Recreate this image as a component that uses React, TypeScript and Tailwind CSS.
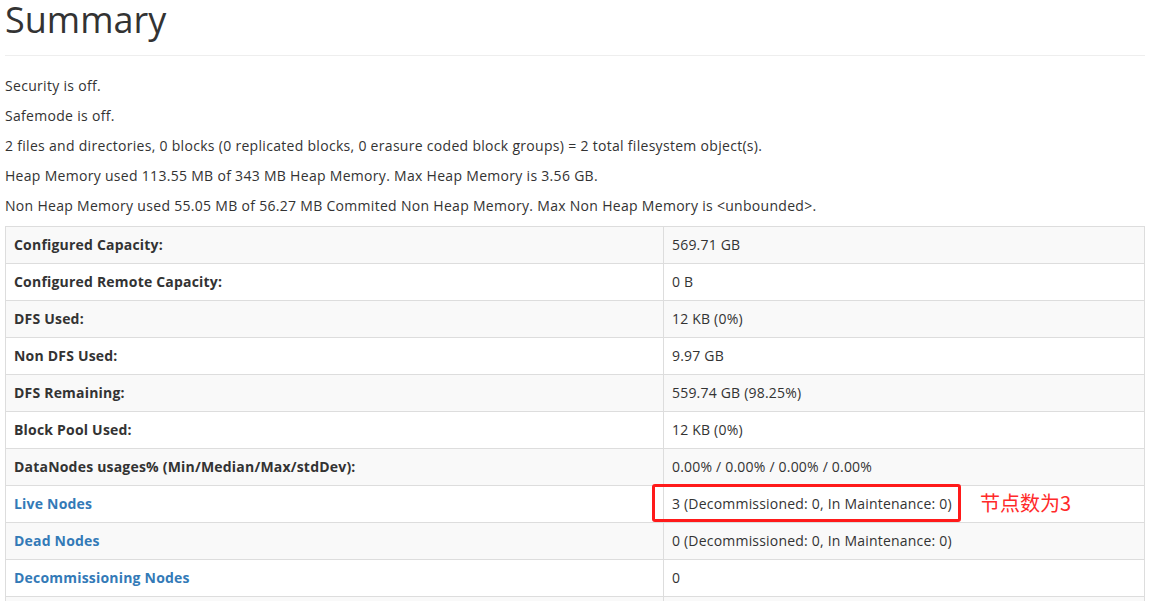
import React from 'react';

type Row = {
  label: string;
  value: string;
  link?: boolean;
};

const rows: Row[] = [
  { label: 'Configured Capacity:', value: '569.71 GB' },
  { label: 'Configured Remote Capacity:', value: '0 B' },
  { label: 'DFS Used:', value: '12 KB (0%)' },
  { label: 'Non DFS Used:', value: '9.97 GB' },
  { label: 'DFS Remaining:', value: '559.74 GB (98.25%)' },
  { label: 'Block Pool Used:', value: '12 KB (0%)' },
  { label: 'DataNodes usages% (Min/Median/Max/stdDev):', value: '0.00% / 0.00% / 0.00% / 0.00%' },
  { label: 'Live Nodes', value: '3 (Decommissioned: 0, In Maintenance: 0)', link: true },
  { label: 'Dead Nodes', value: '0 (Decommissioned: 0, In Maintenance: 0)', link: true },
  { label: 'Decommissioning Nodes', value: '0', link: true },
  // next row is cut off by the bottom of the screenshot
  { label: '', value: '' },
];

const notes = [
  'Security is off.',
  'Safemode is off.',
  '2 files and directories, 0 blocks (0 replicated blocks, 0 erasure coded block groups) = 2 total filesystem object(s).',
  'Heap Memory used 113.55 MB of 343 MB Heap Memory. Max Heap Memory is 3.56 GB.',
  'Non Heap Memory used 55.05 MB of 56.27 MB Commited Non Heap Memory. Max Non Heap Memory is <unbounded>.',
];

const App: React.FC = () => {
  return (
    <div className="h-[601px] overflow-hidden bg-white px-[5px] pr-[12px] text-[14px] leading-[20px] text-[#333] font-['Open_Sans',Arial,sans-serif]">
      <div className="mb-[20px] border-b border-[#eee] pb-[15px]">
        <h1 className="text-[36px] leading-[1.1] font-normal">Summary</h1>
      </div>

      {notes.map(n => (
        <p key={n} className="mb-[10px] tracking-[0.3px]">{n}</p>
      ))}

      <div className="relative">
        <table className="w-full border-collapse border border-[#ddd] tracking-[0.2px]">
          <tbody>
            {rows.map((r, i) => (
              <tr key={i} className={i % 2 === 0 ? 'bg-[#f9f9f9]' : 'bg-white'}>
                <th className="h-[37px] w-[658px] border border-[#ddd] p-2 text-left font-bold">
                  {r.link ? <a href="#" className="text-[#337ab7]">{r.label}</a> : r.label}
                </th>
                <td className="border border-[#ddd] p-2">{r.value}</td>
              </tr>
            ))}
          </tbody>
        </table>

        {/* annotation drawn over the screenshot */}
        <div className="absolute left-[647px] top-[258px] h-[38px] w-[309px] rounded-[3px] border-[3px] border-[#ff1a1a]" />
        <div className="absolute left-[975px] top-[265px] text-[20px] leading-[24px] text-[#ff2a2a] font-['Noto_Sans_CJK_SC',sans-serif]">
          节点数为3
        </div>
      </div>
    </div>
  );
};

export default App;
